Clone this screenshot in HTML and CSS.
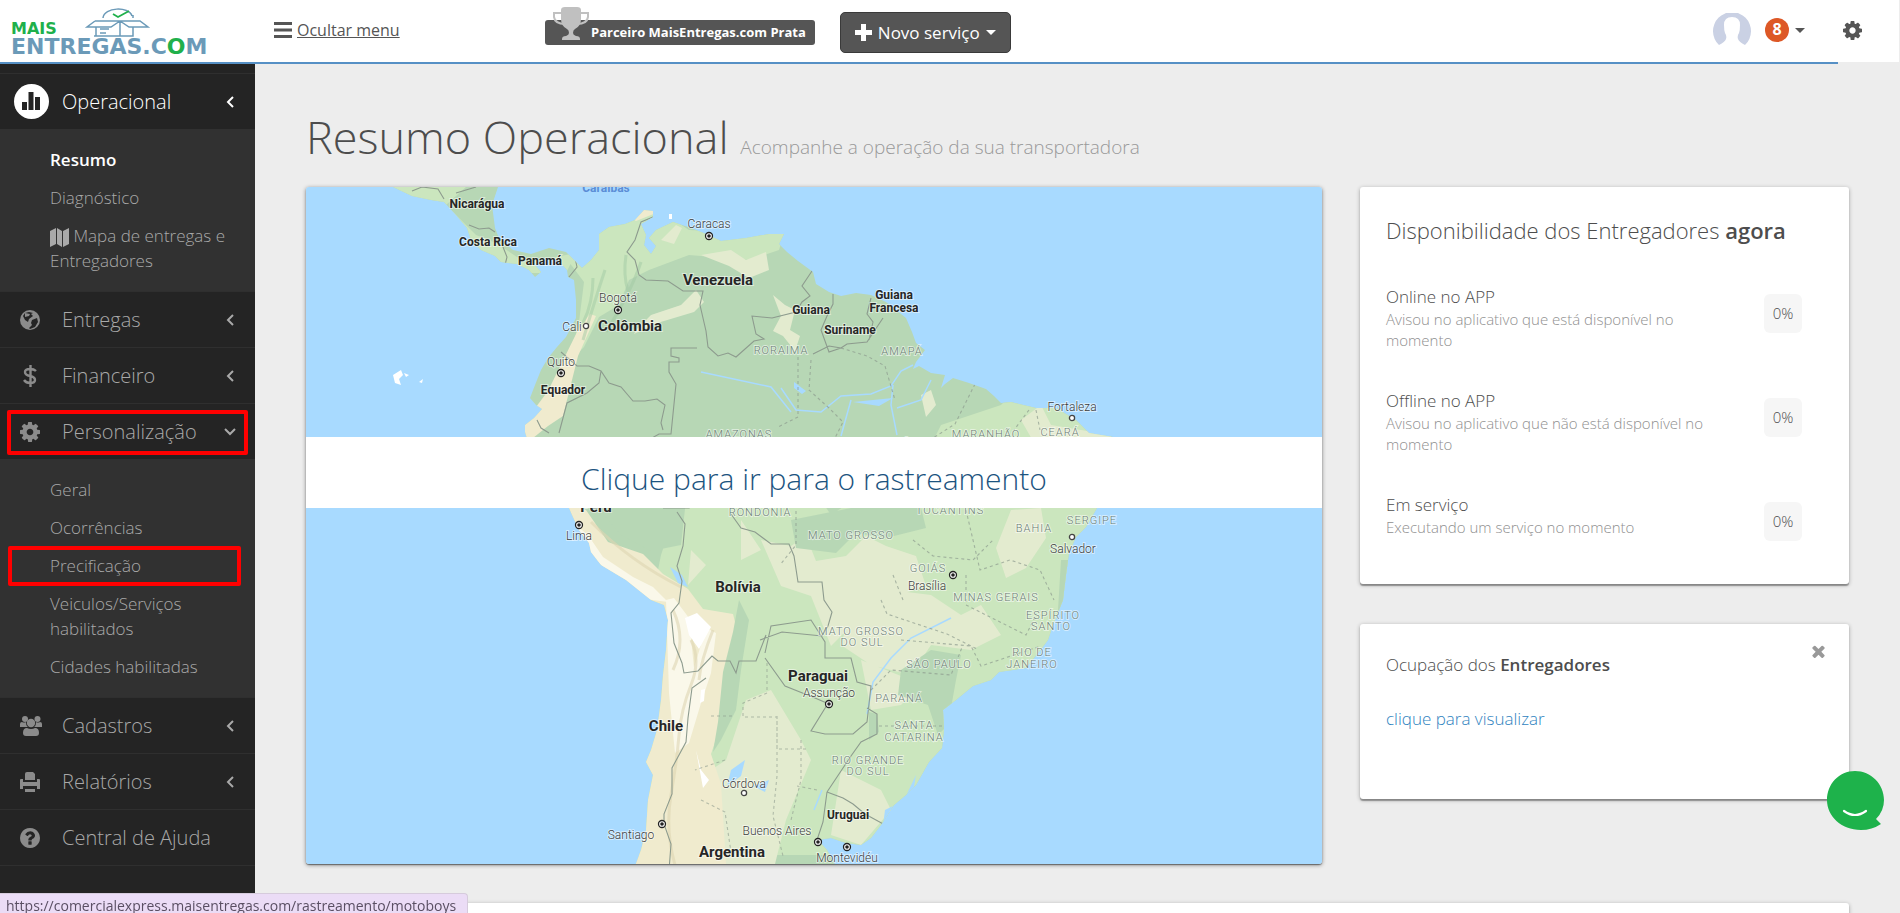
FILE: index.html
```html
<!DOCTYPE html>
<html lang="pt-BR">
<head>
<meta charset="utf-8">
<title>Resumo Operacional</title>
<link rel="stylesheet" href="styles.css">
</head>
<body>
<svg class="defs" width="0" height="0" aria-hidden="true">
  <symbol id="gear" viewBox="0 128 1536 1536"><path d="M1024 896q0-106-75-181t-181-75-181 75-75 181 75 181 181 75 181-75 75-181zm512-109v222q0 12-8 23t-20 13l-185 28q-19 54-39 91 35 50 107 138 10 12 10 25t-9 23q-27 37-99 108t-94 71q-12 0-26-9l-138-108q-44 23-91 38-16 136-29 186-7 28-36 28h-222q-14 0-24.500-8.500t-11.500-21.500l-28-184q-49-16-90-37l-141 107q-10 9-25 9-14 0-25-11-126-114-165-168-7-10-7-23 0-12 8-23 15-21 51-66.500t54-70.500q-27-50-41-99l-183-27q-13-2-21-12.500t-8-23.500v-222q0-12 8-23t19-13l186-28q14-46 39-92-40-57-107-138-10-12-10-24 0-10 9-23 26-36 98.500-107.500t94.500-71.500q13 0 26 10l138 107q44-23 91-38 16-136 29-186 7-28 36-28h222q14 0 24.500 8.500t11.500 21.500l28 184q49 16 90 37l142-107q9-9 24-9 13 0 25 10 129 119 165 170 7 8 7 22 0 12-8 23-15 21-51 66.500t-54 70.500q26 50 41 98l183 28q13 2 21 12.500t8 23.500z"/></symbol>
  <symbol id="left" viewBox="0 0 10 14"><path d="M8 2 3 7l5 5" fill="none" stroke="currentColor" stroke-width="2"/></symbol>
  <symbol id="down" viewBox="0 0 14 10"><path d="M2 2l5 5 5-5" fill="none" stroke="currentColor" stroke-width="2"/></symbol>
  <symbol id="capital" viewBox="0 0 10 10"><circle cx="5" cy="5" r="3.500" fill="#fff" stroke="#222" stroke-width="1.300"/><circle cx="5" cy="5" r="1.800" fill="#222"/></symbol>
  <symbol id="town" viewBox="0 0 10 10"><circle cx="5" cy="5" r="2.600" fill="#fff" stroke="#444" stroke-width="1.300"/></symbol>
</svg>

<div class="app">
  <header class="topbar">
    <a class="logo" href="#" aria-label="Mais Entregas">
      <svg width="255" height="62" viewBox="0 0 255 62">
        <g fill="none" stroke="#6b9ab8" stroke-width="1.500">
          <path d="M103 18c1-11 26-12 29-2M133 15v3M95 21h45l8 6h-15v9h-39M95 21l-8 6h9v9M96 27h15l9-6M120 21l9 6h5M120 21v15M100 29h9M100 33h6"/>
        </g>
        <path d="M113 14l5 3 11-6" fill="none" stroke="#20b04b" stroke-width="1.800"/>
        <text class="logo-top" x="11" y="34">MAIS</text>
        <text class="logo-base" x="11" y="54">ENTREGAS.C<tspan class="logo-pin">O</tspan>M</text>
      </svg>
    </a>
    <a class="toggle" href="#"><svg width="20" height="18" viewBox="0 0 20 18"><path d="M1 2.500h18M1 9h18M1 15.500h18" stroke="#555" stroke-width="3"/></svg><span>Ocultar menu</span></a>
    <div class="partner">
      <svg class="trophy" width="38" height="35" viewBox="0 0 38 35"><path d="M9 4q0-3 4-3h12q4 0 4 3v9q0 7-6 10-2 1-2 4 0 2 3 3 4 0 4 3v1H10v-1q0-3 4-3 3-1 3-3 0-3-2-4-6-3-6-10z" fill="#c0c0c0"/><path d="M9 7H2v4q1 7 11 7M29 7h7v4q-1 7-11 7" fill="none" stroke="#c0c0c0" stroke-width="2"/></svg>
      Parceiro MaisEntregas.com Prata
    </div>
    <button class="new-service" type="button"><svg width="17" height="17" viewBox="0 0 17 17"><path d="M6 0h5v6h6v5h-6v6H6v-6H0V6h6z" fill="#fff"/></svg>Novo serviço<i class="caret"></i></button>
    <div class="account">
      <button class="user" type="button" aria-label="Conta">
        <svg width="38" height="34" viewBox="0 0 38 34"><path d="M6 32A19 19 0 1 1 32 32Q26 29 25 26q-1-3 1-6 1-3 1-8 0-8-8-8t-8 8q0 5 1 8 2 3 1 6-1 3-7 6z" fill="#cad1e4"/></svg>
        <span class="count">8</span><i class="caret"></i>
      </button>
      <button class="settings" type="button" aria-label="Configurações"><svg width="19" height="19"><use href="#gear"/></svg></button>
    </div>
  </header>
  <div class="rule"></div>

  <div class="body">
    <nav class="sidebar">
      <a class="row active" href="#">
        <svg class="ico round" width="35" height="35" viewBox="0 0 35 35"><circle cx="17.500" cy="17.500" r="17.500" fill="#fff"/><path d="M8 18h5v8H8zM14.500 8h5v18h-5zM21 13h5v13h-5z" fill="#242424"/></svg>
        <span>Operacional</span><svg class="chev" width="10" height="14"><use href="#left"/></svg>
      </a>
      <ul class="sub">
        <li><a class="current" href="#">Resumo</a></li>
        <li><a href="#">Diagnóstico</a></li>
        <li><a href="#"><svg class="map-ico" width="19" height="19" viewBox="0 0 19 19"><path d="M0 3l6-3v16l-6 3zM7 0l5 3v16l-5-3zM13 3l6-3v16l-6 3z" fill="#a9a9a9"/></svg> Mapa de entregas e Entregadores</a></li>
      </ul>
      <a class="row" href="#">
        <svg class="ico" width="20" height="20" viewBox="0 0 20 20"><circle cx="10" cy="10" r="10" fill="#8b8b8b"/><path d="M9 2l4 1-2 1 2 2-4 3-1 3-3-2-2-4 2-3zM12 10l5-2 1 4-3 5-5 2-1-1 3-3-1-2z" fill="#242424"/><path d="M5 3l5 1-1 2-4 1z" fill="#8b8b8b"/></svg>
        <span>Entregas</span><svg class="chev" width="10" height="14"><use href="#left"/></svg>
      </a>
      <a class="row" href="#">
        <svg class="ico" width="20" height="22" viewBox="0 0 20 22"><path d="M16 6q-2-2-6-2-5 0-5 3 0 3 5 4t5 4q0 3-5 3-4 0-6-3M10.500 0v22" fill="none" stroke="#8b8b8b" stroke-width="2.400"/></svg>
        <span>Financeiro</span><svg class="chev" width="10" height="14"><use href="#left"/></svg>
      </a>
      <a class="row marked" href="#">
        <svg class="ico" width="20" height="20"><use href="#gear"/></svg>
        <span>Personalização</span><svg class="chev wide" width="14" height="10"><use href="#down"/></svg>
      </a>
      <ul class="sub">
        <li><a href="#">Geral</a></li>
        <li><a href="#">Ocorrências</a></li>
        <li class="marked"><a href="#">Precificação</a></li>
        <li><a href="#">Veiculos/Serviços habilitados</a></li>
        <li><a href="#">Cidades habilitadas</a></li>
      </ul>
      <a class="row" href="#">
        <svg class="ico" width="22" height="20" viewBox="0 0 22 20"><g fill="#8b8b8b"><circle cx="5" cy="3" r="3"/><circle cx="17.500" cy="3" r="3"/><circle cx="11" cy="7" r="4.200"/><path d="M0 11V8q0-2 2-2 2 1 4 0 0 4 2 5zM22 11V8q0-2-2-2-2 1-4 0 0 4-2 5zM3 17q0-5 4-5 4 2 8 0 4 0 4 5 0 3-3 3H6q-3 0-3-3z"/></g></svg>
        <span>Cadastros</span><svg class="chev" width="10" height="14"><use href="#left"/></svg>
      </a>
      <a class="row" href="#">
        <svg class="ico" width="20" height="20" viewBox="0 0 20 20"><path d="M5 8V2q0-2 2-2h6l2 2v6zM0 8q0-1 1-1h2v3h14V7h2q1 0 1 1v9h-3v-3H3v3H0zM5 17h10v3H5z" fill="#8b8b8b"/></svg>
        <span>Relatórios</span><svg class="chev" width="10" height="14"><use href="#left"/></svg>
      </a>
      <a class="row" href="#">
        <svg class="ico" width="20" height="20" viewBox="128 128 1536 1536"><path d="M1024 1376v-192q0-14-9-23t-23-9h-192q-14 0-23 9t-9 23v192q0 14 9 23t23 9h192q14 0 23-9t9-23zm256-672q0-88-55.500-163t-138.500-116-170-41q-243 0-371 213-15 24 8 42l132 100q7 6 19 6 16 0 25-12 53-68 86-92 34-24 86-24 48 0 85.500 26t37.500 59q0 38-20 61t-68 45q-63 28-115.500 86.500t-52.500 125.500v36q0 14 9 23t23 9h192q14 0 23-9t9-23q0-19 21.500-49.500t54.500-49.500q32-18 49-28.500t46-35 44.500-48 28-60.500 12.500-81zm384 192q0 209-103 385.500t-279.500 279.500-385.500 103-385.500-103-279.500-279.500-103-385.500 103-385.500 279.500-279.500 385.500-103 385.500 103 279.500 279.500 103 385.500z" fill="#8b8b8b"/></svg>
        <span>Central de Ajuda</span>
      </a>
      <div class="row-end"></div>
    </nav>

    <main class="content">
      <h1>Resumo Operacional <small>Acompanhe a operação da sua transportadora</small></h1>
      <div class="columns">
        <a class="map" href="#">
          <svg class="map-art" viewBox="305 187 1016 677" preserveAspectRatio="xMidYMid slice">
            <defs>
              <clipPath id="land"><path d="M392 187L411 196 430 200 443 202 455 215 466 228 470 240 480 250 494 256 500 262 516 264 528 270 534 277 540 272 533 264 545 258 557 260 566 270 567 277 573 280 575 300 575 318 565 337 556 347 547 358 540 370 534 385 529 398 535 405 541 409 533 418 524 425 524 432 528 445 540 470 568 508 571 515 578 530 588 543 590 552 600 565 625 580 650 600 663 605 667 620 665 650 662 675 660 700 656 730 650 750 645 762 652 775 647 800 645 830 640 850 634 866 835 866 826 850 817 840 830 838 845 843 860 845 870 838 880 825 893 805 905 795 915 785 928 762 941 748 943 730 942 710 955 700 972 686 990 680 998 672 1025 668 1041 648 1047 640 1052 625 1062 600 1065 575 1068 553 1075 537 1085 527 1096 508 1118 470 1112 437 1088 433 1075 420 1055 408 1035 408 1010 402 1000 403 993 396 985 389 968 383 952 378 944 384 940 388 944 375 930 373 918 366 912 369 915 362 924 350 915 343 911 332 905 318 885 302 870 295 855 293 840 296 828 292 815 284 812 272 797 261 786 252 778 244 783 234 768 234 745 238 720 241 705 234 690 228 672 222 655 230 648 238 655 246 650 254 643 245 645 235 640 224 652 217 652 211 643 210 634 220 624 224 608 227 598 234 598 250 590 260 581 268 575 262 565 252 548 248 530 254 512 250 498 238 494 228 491 205 497 187z"/></clipPath>
            </defs>
            <rect x="305" y="187" width="1016" height="677" fill="#a8daff"/>
            <g clip-path="url(#land)">
              <rect x="305" y="187" width="1016" height="680" fill="#b7d7b5"/>
              <path d="M385 187h80l-20 18 30 30 20 8 30 20 50-10-10 20-80 0-60-50zM598 225l60-15 30 20 95 4-5 16-30 10-60-5-40 15-20 10-10 25-20 12-15 30-15 15 10-40 5-40-15-20zM940 370l60 25 60 10 60 30v75l-40 50-15 60-10 30-50 35-50 20-8 60-60 90H600l60-300 30-90 40-20 20 20 60 20 20 30 30-20 20-30 30 20 30-60 60-20 40-40-20-20-10 20-20-10z" fill="#cbe6be"/>
              <path d="M700 255l30-5 15 10 20-8 3 18-20 8-20-12zM635 330l15-15 30-10 15-15 8 12-10 10-40 12-20 10zM772 295l12 10 10 5-5 20 10 6-5 15-12-15-10-5 8-15zM660 240l15-15 6 3-8 16zM1020 420l20-15 10 20 60 10v20h-70zM920 395l10-5 5 15-10 12zM760 540l30 6 15-10 10 25 30-5 20-20 20 10 30 10 10 30-30 10-15 20-30 10-20 20-20-50-30-10zM1010 510l30-2 5 30-20 30-20 10-10-30zM890 590l40 5 30 20 20-10 20 30-30 15-40-5-20 30-40-10-30-20 10-35zM770 690l30 50 10 20-25 60-15 60H680V790l45-30 20-60zM840 770l40 20 10 20-30 35-30-10zM860 660l50 20 20-5-30 30-30 5zM740 520l20 30-20 10zM690 550l15 15-18 20z" fill="#e3ebcf"/>
              <path d="M565 500l20 10 22 32 35 12 20 20 25 15 15 20 30 5 5 20-5 40-12 50-10 30 10 30 5 80H600V620zM577 330l12-16 6 2-18 40-15 60-15 10-25 20-10-20 20-15 15-20zM625 215l20-10 10 8-20 8z" fill="#f0ebce"/>
              <path d="M665 600l8-2 15 20 5 50 12-40 10 5-5 40-10 30-12 40-14 10-6-60zM575 525l12 10 15 22 30 20 20 10 15 15-30-4-30-26-25-25z" fill="#faf8ea"/>
              <path d="M684 618l12-5 14 14-12 22-10-14zM700 690l4-1-1 12-4 2zM695 750l5 20 8 10-6 8z" fill="#fff"/>
              <path d="M738 600l10 20-8 50-5 40-15 30-8 12 5-30 5-50 10-40zM900 670l30-20 30 5-5 25-8 45-10 10-10-30-30-10zM790 520l60-12 70 0 5 20-40 10-30-5-20 20-40-5zM868 712l8 2 2 18-10 8z" fill="#b7d7b5"/>
              <path d="M590 500h95l-5 45-30 6-30-16zM1060 560l14 0-5 60-12-10z" fill="#b7d7b5"/>
              <path d="M604 270q-10 30-22 70M592 278q0 25-10 45M640 262q-10 30-35 70M625 255q-3 20 2 36" fill="none" stroke="#a2c9a4" stroke-width="3" opacity=".5"/>
              <path d="M690 640q10 20 0 45t-12 50-8 60 4 70M672 610q14 30 0 60M590 522q40 40 90 65M712 630q-12 30-14 50" fill="none" stroke="#ddd6b2" stroke-width="3" opacity=".6"/>
              <path d="M780 388l15 22 25 2 20-16 30-2 20-8 10-15 12-6M700 372l70 15 20 25M892 385l-2 20 6 30M850 400l-10 36M930 380l-10 20-24 8" fill="none" stroke="#a8daff" stroke-width="1.500"/>
              <path d="M852 402l40-4-14 8zM669 567l12 8 6 12-10-4zM793 382l12 9-4 3-8-6zM1081 512l3 8M730 770l14-10-4 16-14 10zM752 786l16-6-4 12zM903 800l12-25-3 18-14 22zM884 810l8-4-10 20z" fill="#a8daff"/>
              <path d="M950 618l-40 20-20 20-18 24-6 32M821 790l-8 20" fill="none" stroke="#a8daff" stroke-width="1.500"/>
              <g fill="none" stroke="#8d9b8e" stroke-width="1.100">
                <path d="M411 191l10-4 16 2 6 10M455 193l20-6M468 225l10 4 10-1 6 4M502 247l4 10-2 8M574 258l2 9-8 10M652 217l-12 5-6 18-8 12 8 8 4 15 7 5 22 1 15 10h20l-3 14 6 26 2 16 10 9 10-3 8 4 18-16 10-2-8-5-4-18 20 2 24-6 6-10 8-6-8-10 10-15-4-20 10-15M696 348h-26v8l8 2v4h-10v10l7 12-5 50h-12l-14 8-30 5M560 352l16 14h12l12 5 8 12 12 4 12 14 12 0 12-2 8 6-4 18 2 7M600 371l-2 12-12 10-20 10-8 30M536 420l4 8 8 5M832 294l0 10-6 12-6 14 8 22 12-4 6-4 20-2 16-24M870 298l-4 16 6 8-4 18M812 354l16-8 12 2M662 508h26l-2-8M676 512l8 12-2 22-6 20 5 15-3 22-8 10 3 30 8 20 2 10 14-2 14-15 6 5 12 0 6 12 3-12h17l10-26M764 653l6-27 40-6 14 22v16l26 0 6 24 14 4-4 36-14 12-28 0-14-3 16-26M764 658l20 28 30 12 14 6M730 514l10 14 14 4 16 12 18 0 5 12 4 26 24 0 2 18 8 12-4 14-6 10-40-4-22 8M866 708l10 6 0 20-16 8-10 14-24 36M826 792l16 6 10 6 12 10 22 12-4 16M826 792l-4 30-6 18M705 678l-14 10-4 30-2 24-14 26 0 26-8 20 0 10 7 20-3 40"/>
                <path d="M766 663v30l-24 10v14h34v32h30M776 716v60l-4 40 10 40M710 716l22 0M724 760l-30 10M700 800l24 12 6 40 20 0M800 740l0 40-10 40M816 790l-20-4" stroke-dasharray="3 3" opacity=".6"/>
                <path d="M840 348l26 8 18 10 10 34M810 360l-2 30 20 18 14 14-10 20M797 357l0 60-20 10M974 384l-20 40-25 16M1028 410l-15 20M1035 410l4 20M795 505v40l-16 20M912 540l20 16 40 4 20-20M965 510l14 60 30-10 30 10 14 30M880 600l6 14 60 20 30 15M892 575l10 25M965 575l0 30 60 30 10-20M900 640l70 6 10 20 60-20M870 690l20-20 60 5 12-30M878 726l70 0" stroke-dasharray="3 3" opacity=".7"/>
              </g>
            </g>
            <path d="M392 375l8-5 2 5-4 4 2 6-6-2zM403 373l5 2-3 2zM418 382l4-3-1 4zM783 189l3 2M800 200l3 2M668 214l3 0 0 5-3 0z" fill="#fff"/>
            <g class="country small"><text x="605" y="192" class="sea">Caraíbas</text><text x="476" y="208">Nicarágua</text><text x="487" y="246">Costa Rica</text><text x="539" y="265">Panamá</text><text x="562" y="394">Equador</text><text x="810" y="314">Guiana</text><text x="893" y="299">Guiana</text><text x="893" y="312">Francesa</text><text x="849" y="334">Suriname</text><text x="847" y="819">Uruguai</text></g>
            <g class="country"><text x="717" y="285">Venezuela</text><text x="629" y="331">Colômbia</text><text x="595" y="512">Peru</text><text x="737" y="592">Bolívia</text><text x="817" y="681">Paraguai</text><text x="665" y="731">Chile</text><text x="731" y="857">Argentina</text></g>
            <g class="city"><text x="708" y="228">Caracas</text><text x="617" y="302">Bogotá</text><text x="571" y="331">Cali</text><text x="560" y="366">Quito</text><text x="1071" y="411">Fortaleza</text><text x="578" y="540">Lima</text><text x="1072" y="553">Salvador</text><text x="926" y="590">Brasília</text><text x="828" y="697">Assunção</text><text x="743" y="788">Córdova</text><text x="776" y="835">Buenos Aires</text><text x="630" y="839">Santiago</text><text x="846" y="862">Montevidéu</text></g>
            <g class="state"><text x="780" y="354">RORAIMA</text><text x="901" y="355">AMAPÁ</text><text x="738" y="438">AMAZONAS</text><text x="893" y="447">PARÁ</text><text x="985" y="438">MARANHÃO</text><text x="1059" y="436">CEARÁ</text><text x="759" y="516">RONDÔNIA</text><text x="949" y="514">TOCANTINS</text><text x="1091" y="524">SERGIPE</text><text x="1033" y="532">BAHIA</text><text x="850" y="539">MATO GROSSO</text><text x="927" y="572">GOIÁS</text><text x="995" y="601">MINAS GERAIS</text><text x="1052" y="619">ESPÍRITO</text><text x="1050" y="630">SANTO</text><text x="860" y="635">MATO GROSSO</text><text x="861" y="646">DO SUL</text><text x="938" y="668">SÃO PAULO</text><text x="1031" y="656">RIO DE</text><text x="1031" y="668">JANEIRO</text><text x="898" y="702">PARANÁ</text><text x="913" y="729">SANTA</text><text x="913" y="741">CATARINA</text><text x="867" y="764">RIO GRANDE</text><text x="867" y="775">DO SUL</text></g>
            <g><use href="#capital" x="703" y="231" width="10" height="10"/><use href="#capital" x="612" y="305" width="10" height="10"/><use href="#capital" x="555" y="368" width="10" height="10"/><use href="#capital" x="573" y="520" width="10" height="10"/><use href="#capital" x="947" y="570" width="10" height="10"/><use href="#capital" x="823" y="699" width="10" height="10"/><use href="#capital" x="656" y="819" width="10" height="10"/><use href="#capital" x="812" y="837" width="10" height="10"/><use href="#capital" x="841" y="842" width="10" height="10"/><use href="#town" x="580" y="321" width="10" height="10"/><use href="#town" x="1066" y="413" width="10" height="10"/><use href="#town" x="1066" y="532" width="10" height="10"/><use href="#town" x="738" y="788" width="10" height="10"/></g>
          </svg>
          <span class="map-banner">Clique para ir para o rastreamento</span>
        </a>
        <div class="side">
          <section class="card availability">
            <h2>Disponibilidade dos Entregadores <b>agora</b></h2>
            <div class="stat"><div class="stat-text"><h3>Online no APP</h3><p>Avisou no aplicativo que está disponível no momento</p></div><span class="pct">0%</span></div>
            <div class="stat"><div class="stat-text"><h3>Offline no APP</h3><p>Avisou no aplicativo que não está disponível no momento</p></div><span class="pct">0%</span></div>
            <div class="stat"><div class="stat-text"><h3>Em serviço</h3><p>Executando um serviço no momento</p></div><span class="pct">0%</span></div>
          </section>
          <section class="card occupation">
            <div class="occ-head"><h3>Ocupação dos <b>Entregadores</b></h3><button class="close" type="button" aria-label="Fechar"><svg width="13" height="13" viewBox="302 302 1188 1252"><path d="M1490 1322q0 40-28 68l-136 136q-28 28-68 28t-68-28l-294-294-294 294q-28 28-68 28t-68-28l-136-136q-28-28-28-68t28-68l294-294-294-294q-28-28-28-68t28-68l136-136q28-28 68-28t68 28l294 294 294-294q28-28 68-28t68 28l136 136q28 28 28 68t-28 68l-294 294 294 294q28 28 28 68z" fill="#999"/></svg></button></div>
            <a href="#">clique para visualizar</a>
          </section>
        </div>
      </div>
      <section class="card next"></section>
    </main>
  </div>
</div>
<button class="chat" type="button" aria-label="Abrir chat"><svg width="57" height="60" viewBox="0 0 57 60"><path d="M28 0C44 0 57 13 57 29q0 11-8 19l5 5Q45 59 34 59C14 59 0 45 0 29 0 13 12 0 28 0z" fill="#1eb24b"/><path d="M17 40q11 8 22 0" fill="none" stroke="#fff" stroke-width="2.200" stroke-linecap="round"/></svg></button>
<div class="status">https://comercialexpress.maisentregas.com/rastreamento/motoboys</div>
</body>
</html>
```
FILE: styles.css
```css
* { box-sizing: border-box; }
body { margin: 0; background: #ededed; color: #4d4d4d; font: 300 17px/24px "Open Sans", sans-serif; }
h1, h2, h3, p, ul { margin: 0; padding: 0; font-weight: 300; }
ul { list-style: none; }
a { color: inherit; text-decoration: none; }
button { border: 0; padding: 0; background: none; font: inherit; color: inherit; }
svg { display: block; }
.defs { position: absolute; }
.app { height: 100vh; overflow: hidden; display: flex; flex-direction: column; }

.topbar { display: flex; align-items: center; height: 62px; flex: none; background: #fff; border-right: 1px solid #ededed; }
.rule { flex: none; height: 2px; margin-right: 62px; background: #5690c5; }
.logo { width: 255px; }
.logo-top, .logo-base { font: 700 16px "DejaVu Sans", sans-serif; fill: #20b04b; }
.logo-base { font-size: 22px; fill: #6b9ab8; }
.logo-pin { fill: #20b04b; }
.toggle { display: flex; align-items: center; gap: 4px; width: 128px; margin: 0 0 2px 18px; color: #555; font-size: 16px; font-weight: 400; text-decoration: underline; white-space: nowrap; }
.partner { position: relative; margin: 3px 0 0 144px; padding: 0 9px 0 46px; border-radius: 3px; background: #555; color: #fff; font-size: 13px; font-weight: 700; line-height: 25px; white-space: nowrap; }
.trophy { position: absolute; left: 7px; top: -14px; }
.new-service { display: flex; align-items: center; gap: 6px; margin: 3px 0 0 25px; padding: 0 14px; height: 41px; border: 1px solid #3a3a3a; border-radius: 5px; background: #555; color: #fff; font-weight: 400; white-space: nowrap; }
.caret { border: 5px solid transparent; border-top-color: currentColor; border-bottom: 0; }
.account { display: flex; align-items: center; gap: 38px; margin: 0 0 2px auto; padding-right: 37px; color: #555; }
.user { display: flex; align-items: center; }
.count { margin: 0 6px 0 14px; width: 24px; height: 24px; border-radius: 12px; background: #dd5826; color: #fff; font-size: 16px; font-weight: 700; line-height: 23px; text-align: center; }
.settings { fill: #555; }

.body { display: flex; flex: 1; min-height: 0; }
.sidebar { flex: none; width: 255px; padding-top: 9px; background: #242424; color: #a9a9a9; }
.row { position: relative; display: flex; align-items: center; height: 56px; padding: 0 20px; border-top: 1px solid #2f2f2f; font-size: 20px; }
.row span { flex: 1; white-space: nowrap; }
.row.active { color: #fff; padding-left: 14px; }
.row-end { border-top: 1px solid #2f2f2f; }
.ico { flex: none; margin-right: 22px; fill: #8b8b8b; }
.ico.round { margin-right: 13px; }
.ico[width="22"] { margin-right: 20px; }
.chev.wide { margin-right: -2px; }
.sub { padding: 12px 20px 11px 50px; background: #313131; line-height: 25px; }
.sub li { position: relative; padding: 6px 0 7px; }
.sub .current { color: #fff; font-weight: 600; }
.map-ico { display: inline-block; vertical-align: middle; }
.row.marked::after, li.marked::after { content: ""; position: absolute; inset: 6px 7px 4px; border: 4px solid #f00; border-radius: 2px; }
li.marked::after { inset: -1px -6px -1px -42px; }

.content { flex: 1; min-width: 0; padding: 48px 51px 0; }
h1 { height: 50px; margin-bottom: 25px; font-size: 45px; line-height: 50px; white-space: nowrap; }
h1 small { color: #999; font-size: 19px; line-height: 24px; }
.columns { display: grid; grid-template-columns: 1016fr 489fr; gap: 38px; margin-bottom: 39px; }
.map { position: relative; height: 677px; overflow: hidden; border-radius: 3px; box-shadow: 0 1px 4px rgba(0,0,0,.45), 0 1px 1px rgba(0,0,0,.4); }
.map-art { width: 100%; height: 100%; font-family: Roboto, sans-serif; text-anchor: middle; }
.map-art text { paint-order: stroke; stroke: #fff; stroke-opacity: .5; stroke-width: 2px; }
.country { font-size: 15px; font-weight: 700; fill: #262626; }
.country.small { font-size: 12px; }
.map-art .sea { fill: #5b8dd6; stroke: none; }
.city { font-size: 12px; fill: #3c3c3c; }
.state { font-size: 11px; fill: #6a7c74; letter-spacing: 1px; }
.map-banner { position: absolute; left: 0; right: 0; top: 250px; padding: 21px 0 9px; background: #fff; color: #1c5480; font-size: 30px; line-height: 41px; text-align: center; }
.side { display: flex; flex-direction: column; gap: 40px; }
.card { border-radius: 3px; background: #fff; box-shadow: 0 1px 4px rgba(0,0,0,.3), 0 2px 1px rgba(0,0,0,.3); }
.availability { height: 397px; padding: 26px 47px 0 26px; }
h2 { margin-bottom: 38px; font-size: 22px; line-height: 34px; white-space: nowrap; }
h2 b, h3 b { font-weight: 600; }
h3 { font-size: 17px; line-height: 24px; }
.stat { display: flex; justify-content: space-between; align-items: flex-start; height: 104px; }
.stat-text { width: 340px; }
.stat p { color: #8f8f8f; font-size: 15px; line-height: 21px; }
.pct { margin-top: 9px; width: 38px; border-radius: 6px; background: #f6f6f6; font-size: 15px; line-height: 39px; text-align: center; }
.occupation { height: 175px; padding: 21px 24px 0 26px; }
.occ-head { display: flex; justify-content: space-between; align-items: flex-start; margin-bottom: 30px; }
.occ-head h3 { padding-top: 8px; }
.occupation a { color: #2f83c0; }
.next { height: 200px; }

.chat { position: fixed; right: 16px; bottom: 82px; }
.status { position: fixed; left: 0; bottom: 0; height: 20px; padding: 0 11px 0 6px; border: 1px solid #d6cbdc; border-width: 1px 1px 0 0; border-radius: 0 4px 0 0; background: #ebdcf6; color: #5a4f63; font: 400 14px/24px "Open Sans", sans-serif; }
```
